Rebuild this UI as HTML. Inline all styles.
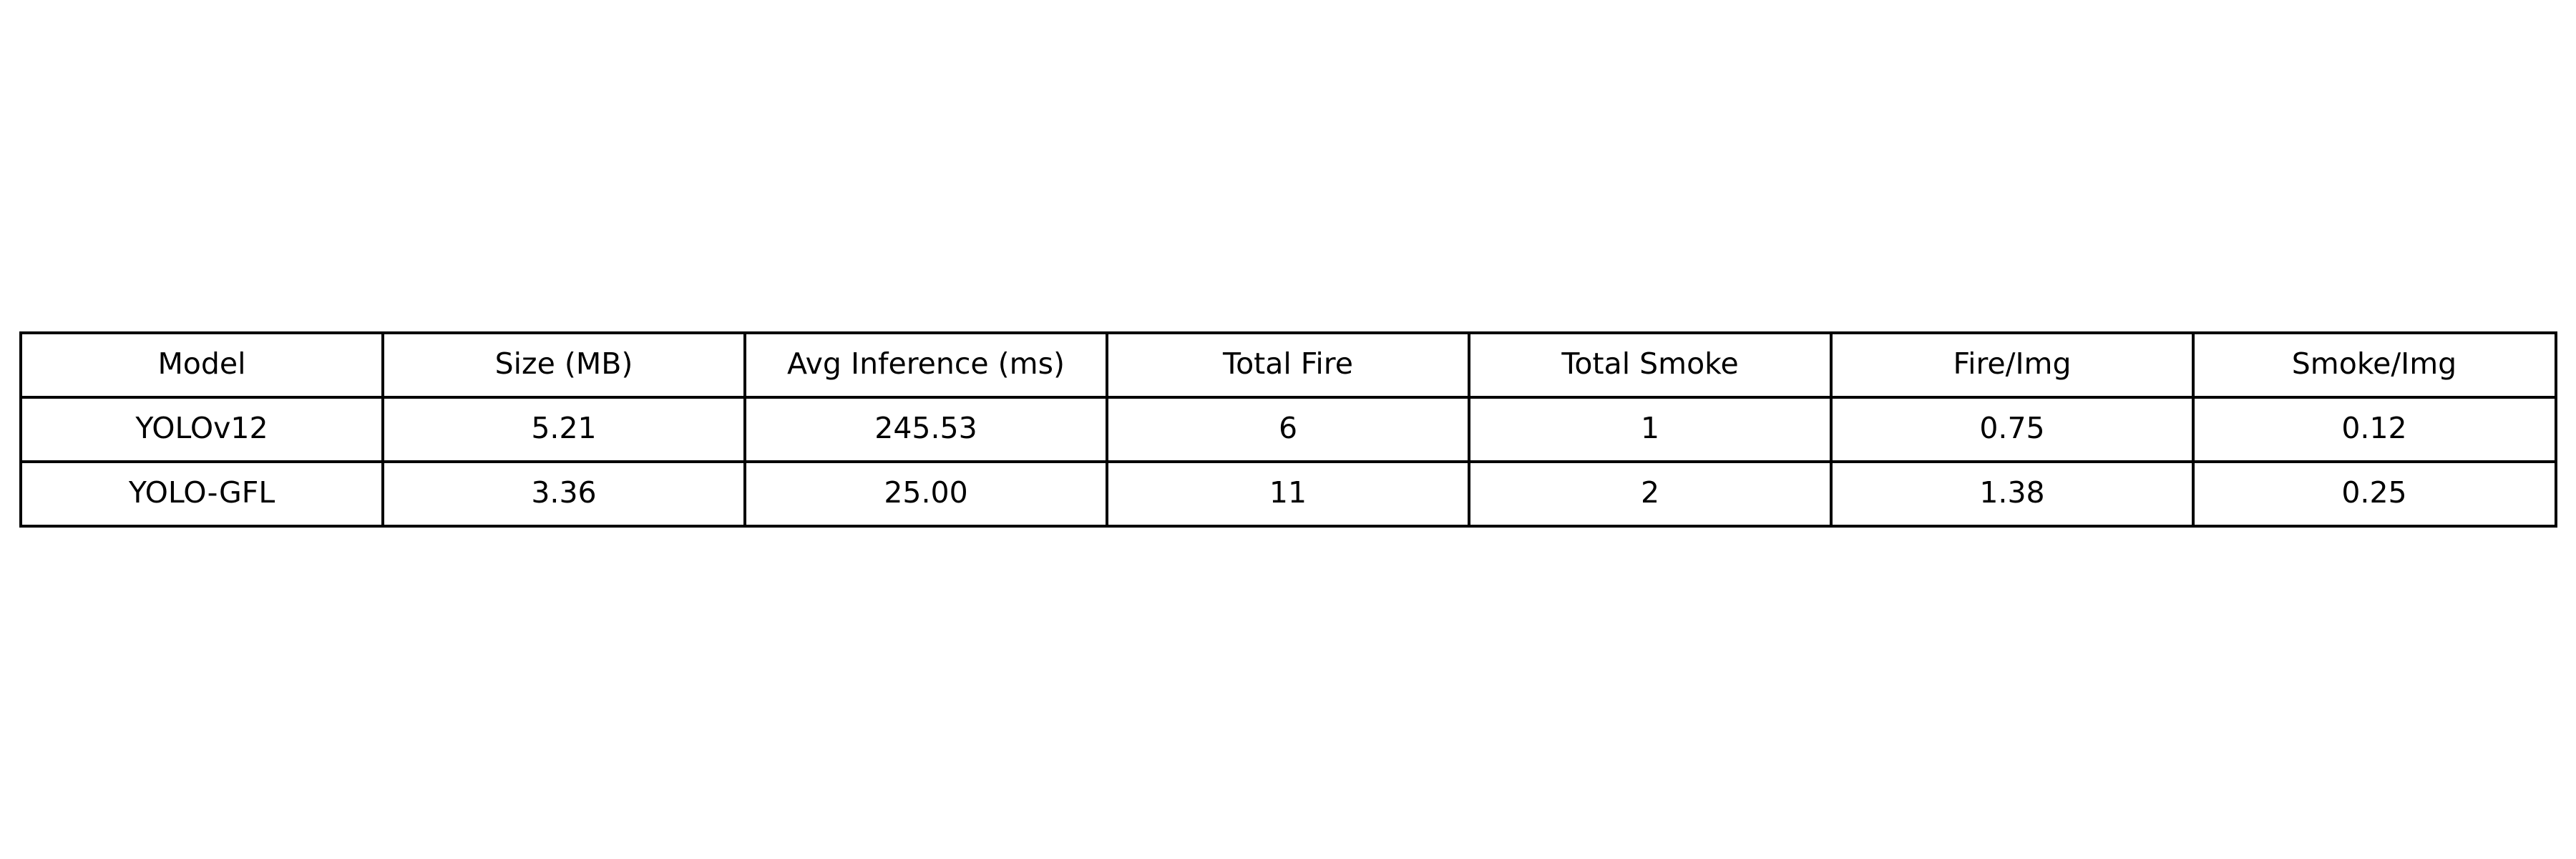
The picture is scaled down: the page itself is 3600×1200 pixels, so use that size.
<!DOCTYPE html>
<html><head><style>
html,body{margin:0;padding:0;background:#fff;width:3600px;height:1200px;overflow:hidden;position:relative}
.h{position:absolute;left:27px;width:3547px;height:4px;background:#000}
.v{position:absolute;top:463px;height:274px;width:4px;background:#000}
.c{position:absolute;width:506px;height:90px;line-height:86px;text-align:center;font-family:"DejaVu Sans","Liberation Sans",sans-serif;font-size:41px;color:#000}
</style></head><body>
<div class="h" style="top:463px"></div>
<div class="h" style="top:553px"></div>
<div class="h" style="top:643px"></div>
<div class="h" style="top:733px"></div>
<div class="v" style="left:27px"></div>
<div class="v" style="left:533px"></div>
<div class="v" style="left:1039px"></div>
<div class="v" style="left:1545px"></div>
<div class="v" style="left:2051px"></div>
<div class="v" style="left:2557px"></div>
<div class="v" style="left:3063px"></div>
<div class="v" style="left:3570px"></div>

<div class="c" style="left:29px;top:465px">Model</div>
<div class="c" style="left:535px;top:465px">Size (MB)</div>
<div class="c" style="left:1041px;top:465px">Avg Inference (ms)</div>
<div class="c" style="left:1547px;top:465px">Total Fire</div>
<div class="c" style="left:2053px;top:465px">Total Smoke</div>
<div class="c" style="left:2559px;top:465px">Fire/Img</div>
<div class="c" style="left:3065px;top:465px">Smoke/Img</div>

<div class="c" style="left:29px;top:555px">YOLOv12</div>
<div class="c" style="left:535px;top:555px">5.21</div>
<div class="c" style="left:1041px;top:555px">245.53</div>
<div class="c" style="left:1547px;top:555px">6</div>
<div class="c" style="left:2053px;top:555px">1</div>
<div class="c" style="left:2559px;top:555px">0.75</div>
<div class="c" style="left:3065px;top:555px">0.12</div>

<div class="c" style="left:29px;top:645px">YOLO-GFL</div>
<div class="c" style="left:535px;top:645px">3.36</div>
<div class="c" style="left:1041px;top:645px">25.00</div>
<div class="c" style="left:1547px;top:645px">11</div>
<div class="c" style="left:2053px;top:645px">2</div>
<div class="c" style="left:2559px;top:645px">1.38</div>
<div class="c" style="left:3065px;top:645px">0.25</div>
</body></html>
